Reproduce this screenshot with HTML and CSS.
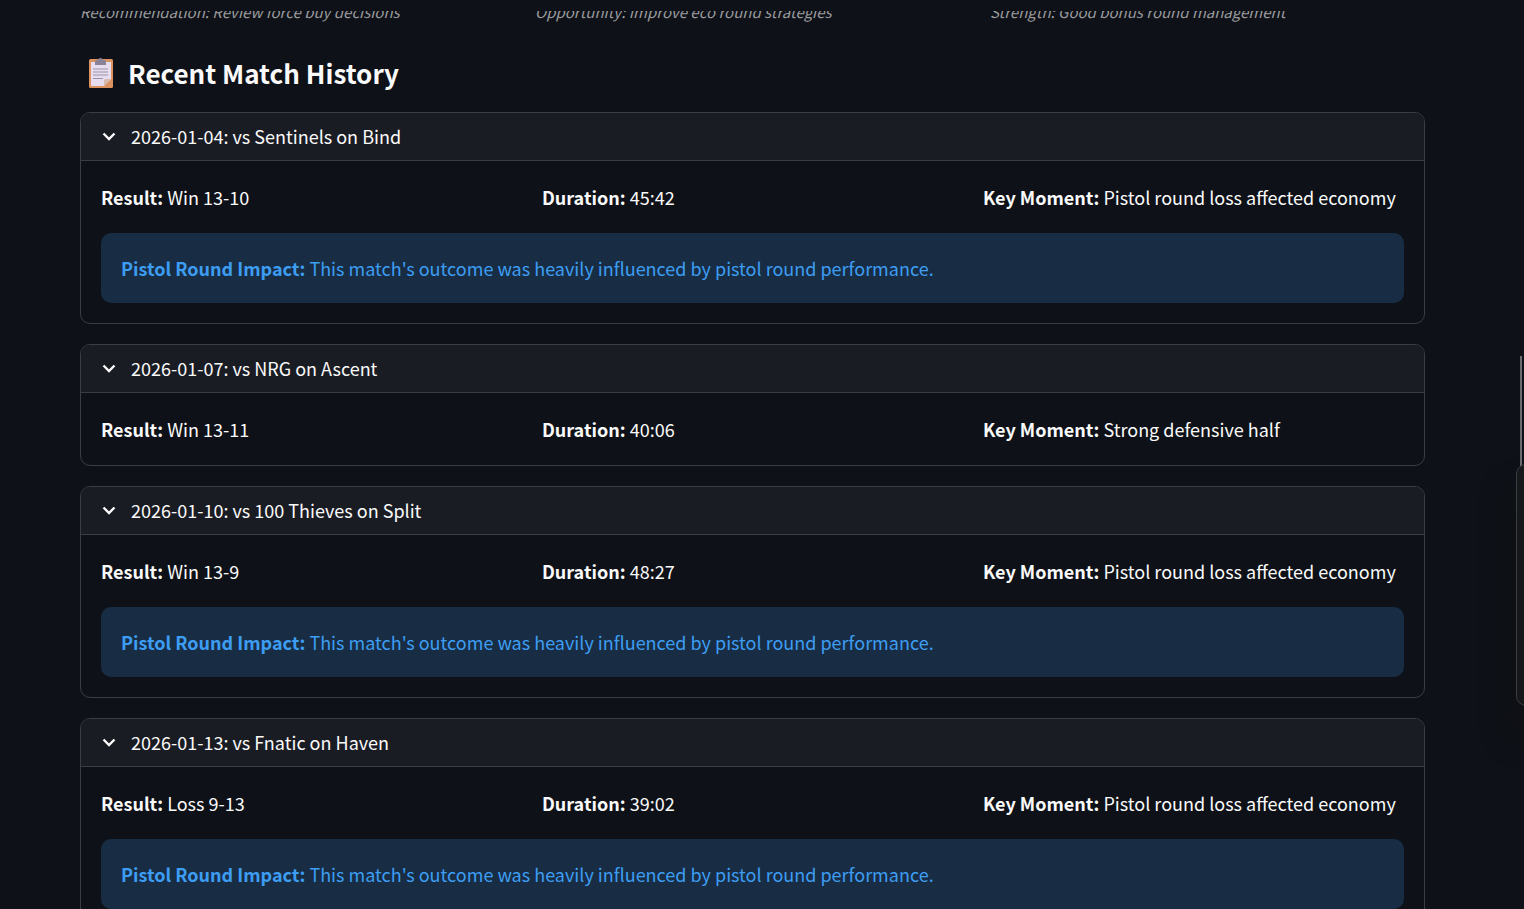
FILE: index.html
```html
<!DOCTYPE html>
<html lang="en">
<head>
  <meta charset="UTF-8">
  <meta name="viewport" content="width=device-width, initial-scale=1">
  <title>Recent Match History</title>
  <link rel="stylesheet" href="styles.css">
</head>
<body>
  <header class="topbar"></header>

  <main class="container">
    <!-- Economy notes -->
    <div class="columns notes">
      <p>Recommendation: Review force buy decisions</p>
      <p>Opportunity: Improve eco round strategies</p>
      <p>Strength: Good bonus round management</p>
    </div>

    <h2 class="heading">
      <svg class="clipboard" viewBox="0 0 26 32" aria-hidden="true">
        <rect x="1" y="2" width="24" height="29" rx="1.5" fill="#dc935f"/>
        <path d="M3 5h20v17l-7 7H3z" fill="#e6def0"/>
        <path d="M16 29v-5.500q0-1.500 1.500-1.500H23z" fill="#d9b9ae"/>
        <path d="M7 8V4.500Q7 3 8.500 3H10q.5-2 2.500-2T15 3h1.500Q18 3 18 4.500V8z" fill="#8a8296"/>
        <path d="M5 12h15M5 15h15M5 18h15M5 21.500h10" stroke="#9a93a8" stroke-width="1" fill="none"/>
      </svg>
      <span>Recent Match History</span>
    </h2>

    <!-- Matches -->
    <div class="matches">
      <details class="match" open>
        <summary>
          <svg class="chevron" viewBox="0 0 16 16" aria-hidden="true"><path d="M2.500 5.500l5.500 5.500 5.500-5.500"/></svg>
          <span>2026-01-04: vs Sentinels on Bind</span>
        </summary>
        <div class="match-body">
          <div class="columns">
            <p><strong>Result:</strong> Win 13-10</p>
            <p><strong>Duration:</strong> 45:42</p>
            <p><strong>Key Moment:</strong> Pistol round loss affected economy</p>
          </div>
          <div class="alert" role="alert">
            <p><strong>Pistol Round Impact:</strong> This match's outcome was heavily influenced by pistol round performance.</p>
          </div>
        </div>
      </details>

      <details class="match" open>
        <summary>
          <svg class="chevron" viewBox="0 0 16 16" aria-hidden="true"><path d="M2.500 5.500l5.500 5.500 5.500-5.500"/></svg>
          <span>2026-01-07: vs NRG on Ascent</span>
        </summary>
        <div class="match-body">
          <div class="columns">
            <p><strong>Result:</strong> Win 13-11</p>
            <p><strong>Duration:</strong> 40:06</p>
            <p><strong>Key Moment:</strong> Strong defensive half</p>
          </div>
        </div>
      </details>

      <details class="match" open>
        <summary>
          <svg class="chevron" viewBox="0 0 16 16" aria-hidden="true"><path d="M2.500 5.500l5.500 5.500 5.500-5.500"/></svg>
          <span>2026-01-10: vs 100 Thieves on Split</span>
        </summary>
        <div class="match-body">
          <div class="columns">
            <p><strong>Result:</strong> Win 13-9</p>
            <p><strong>Duration:</strong> 48:27</p>
            <p><strong>Key Moment:</strong> Pistol round loss affected economy</p>
          </div>
          <div class="alert" role="alert">
            <p><strong>Pistol Round Impact:</strong> This match's outcome was heavily influenced by pistol round performance.</p>
          </div>
        </div>
      </details>

      <details class="match" open>
        <summary>
          <svg class="chevron" viewBox="0 0 16 16" aria-hidden="true"><path d="M2.500 5.500l5.500 5.500 5.500-5.500"/></svg>
          <span>2026-01-13: vs Fnatic on Haven</span>
        </summary>
        <div class="match-body">
          <div class="columns">
            <p><strong>Result:</strong> Loss 9-13</p>
            <p><strong>Duration:</strong> 39:02</p>
            <p><strong>Key Moment:</strong> Pistol round loss affected economy</p>
          </div>
          <div class="alert" role="alert">
            <p><strong>Pistol Round Impact:</strong> This match's outcome was heavily influenced by pistol round performance.</p>
          </div>
        </div>
      </details>
    </div>
  </main>

  <div class="scroll-thumb"></div>
  <aside class="side-panel"></aside>
</body>
</html>
```
FILE: styles.css
```css
* {
  margin: 0;
  padding: 0;
  box-sizing: border-box;
}
body {
  height: 100vh;
  overflow: hidden;
  background-color: #0e1117;
  color: #fafafa;
  font-family: "Noto Sans CJK SC", "Open Sans", sans-serif;
  font-size: 18px;
  line-height: 32px;
}
.topbar {
  position: fixed;
  top: 0;
  left: 0;
  right: 0;
  height: 11px;
  background-color: #0e1117;
}
.container {
  padding: 0 99px 0 80px;
}
.columns {
  display: grid;
  grid-template-columns: repeat(3, 1fr);
  gap: 20px;
}
.notes {
  color: #9a9b9e;
  font-size: 15px;
  font-style: italic;
  line-height: 24px;
}
.heading {
  display: flex;
  align-items: center;
  gap: 14px;
  padding: 27px 0 17px 8px;
  font-size: 26px;
  font-weight: 600;
  line-height: 44px;
}
.clipboard {
  width: 26px;
  height: 32px;
}
.matches {
  display: flex;
  flex-direction: column;
  gap: 20px;
}
.match {
  border: 1px solid #3b3d43;
  border-radius: 10px;
  overflow: hidden;
}
.match summary {
  display: flex;
  align-items: center;
  gap: 14px;
  height: 48px;
  padding: 0 20px 2px;
  background-color: #1a1c24;
  border-bottom: 1px solid #3b3d43;
  list-style: none;
  cursor: pointer;
}
.chevron {
  width: 16px;
  height: 16px;
  fill: none;
  stroke: #fafafa;
  stroke-width: 2.400;
}
.match-body {
  display: flex;
  flex-direction: column;
  gap: 20px;
  padding: 20px;
}
.alert {
  padding: 19px 20px;
  border-radius: 10px;
  background-color: #182d43;
  color: #3d9df3;
}
strong {
  font-weight: 600;
}
.scroll-thumb {
  position: fixed;
  top: 356px;
  right: 2px;
  width: 2px;
  height: 112px;
  background-color: #6b6c70;
}
.side-panel {
  position: fixed;
  top: 464px;
  right: -12px;
  width: 20px;
  height: 242px;
  border: 1px solid #3b3d3f;
  border-radius: 10px;
  background-color: #15191c;
  box-shadow: 0 28px 32px rgba(16, 16, 16, 0.7);
}
```
